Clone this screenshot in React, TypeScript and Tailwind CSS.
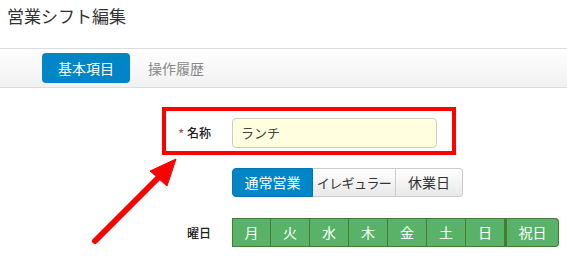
import React from "react";

const days = ["月", "火", "水", "木", "金", "土", "日"];

export default function App() {
  return (
    <div
      className="relative w-[567px] h-[257px] overflow-hidden bg-white text-[#333]"
      style={{ fontFamily: '"Noto Sans CJK JP", "Noto Sans", sans-serif' }}
    >
      <h1 className="pl-[7px] pt-[3px] h-[48px] text-[17px] leading-[26px] text-[#333]">営業シフト編集</h1>
      <div className="h-[40px] border-y border-[#dcdcdc] bg-gradient-to-b from-white to-[#f1f1f1] flex items-center pl-[42px] gap-[2px]">
        <div className="h-[30px] px-4 rounded-[4px] bg-[#0085c7] text-white text-[14px] flex items-center">基本項目</div>
        <div className="h-[30px] px-4 text-[#888] text-[14px] flex items-center">操作履歴</div>
      </div>
      <div className="pt-[30px] flex flex-col gap-[20px]">
        <div className="flex items-center">
          <div className="w-[211px] text-right text-[12px] font-medium text-[#222]">
            <span className="text-[#a0506a] mr-[3px]">*</span>名称
          </div>
          <div className="ml-[21px] w-[205px] h-[30px] rounded-[4px] border border-[#cccccc] bg-[#ffffe0] flex items-center pl-[8px] text-[13px] text-[#444]">
            ランチ
          </div>
        </div>
        <div className="flex items-center">
          <div className="w-[211px]" />
          <div className="ml-[21px] flex h-[29px] text-[14px] whitespace-nowrap">
            <div className="w-[81px] flex items-center justify-center bg-[#0085c7] text-white border border-[#0077b3] rounded-l-[4px]">通常営業</div>
            <div className="w-[83px] flex items-center justify-center bg-gradient-to-b from-white to-[#e8e8e8] text-[#333] border border-[#cccccc] border-l-0 text-[13px] tracking-[-0.6px]">イレギュラー</div>
            <div className="w-[67px] flex items-center justify-center bg-gradient-to-b from-white to-[#e8e8e8] text-[#333] border border-[#cccccc] border-l-0 rounded-r-[4px]">休業日</div>
          </div>
        </div>
        <div className="flex items-center mt-[1px]">
          <div className="w-[211px] text-right text-[12px] font-medium text-[#222]">曜日</div>
          <div className="ml-[21px] flex h-[29px] text-[14px] text-white">
            {days.map((d, i) => (
              <div
                key={d}
                className={
                  "w-[39px] flex items-center justify-center bg-[#58b368] border border-[#457c30] " +
                  (i === 0 ? "" : "border-l-0")
                }
              >
                {d}
              </div>
            ))}
            <div className="w-[54px] flex items-center justify-center bg-[#58b368] border border-[#457c30] border-l-[2px] rounded-r-[4px]">祝日</div>
          </div>
        </div>
      </div>
      <div className="absolute left-[162px] top-[107px] w-[294px] h-[48px] border-4 border-[#ff0000]" />
      <svg className="absolute left-0 top-0" width="567" height="257" viewBox="0 0 567 257">
        <line x1="95" y1="241" x2="158" y2="178" stroke="#ff0000" strokeWidth="6" strokeLinecap="round" />
        <polygon points="176,159 150,171 167,186" fill="#ff0000" stroke="#ff0000" strokeWidth="1" strokeLinejoin="round" />
      </svg>
    </div>
  );
}
